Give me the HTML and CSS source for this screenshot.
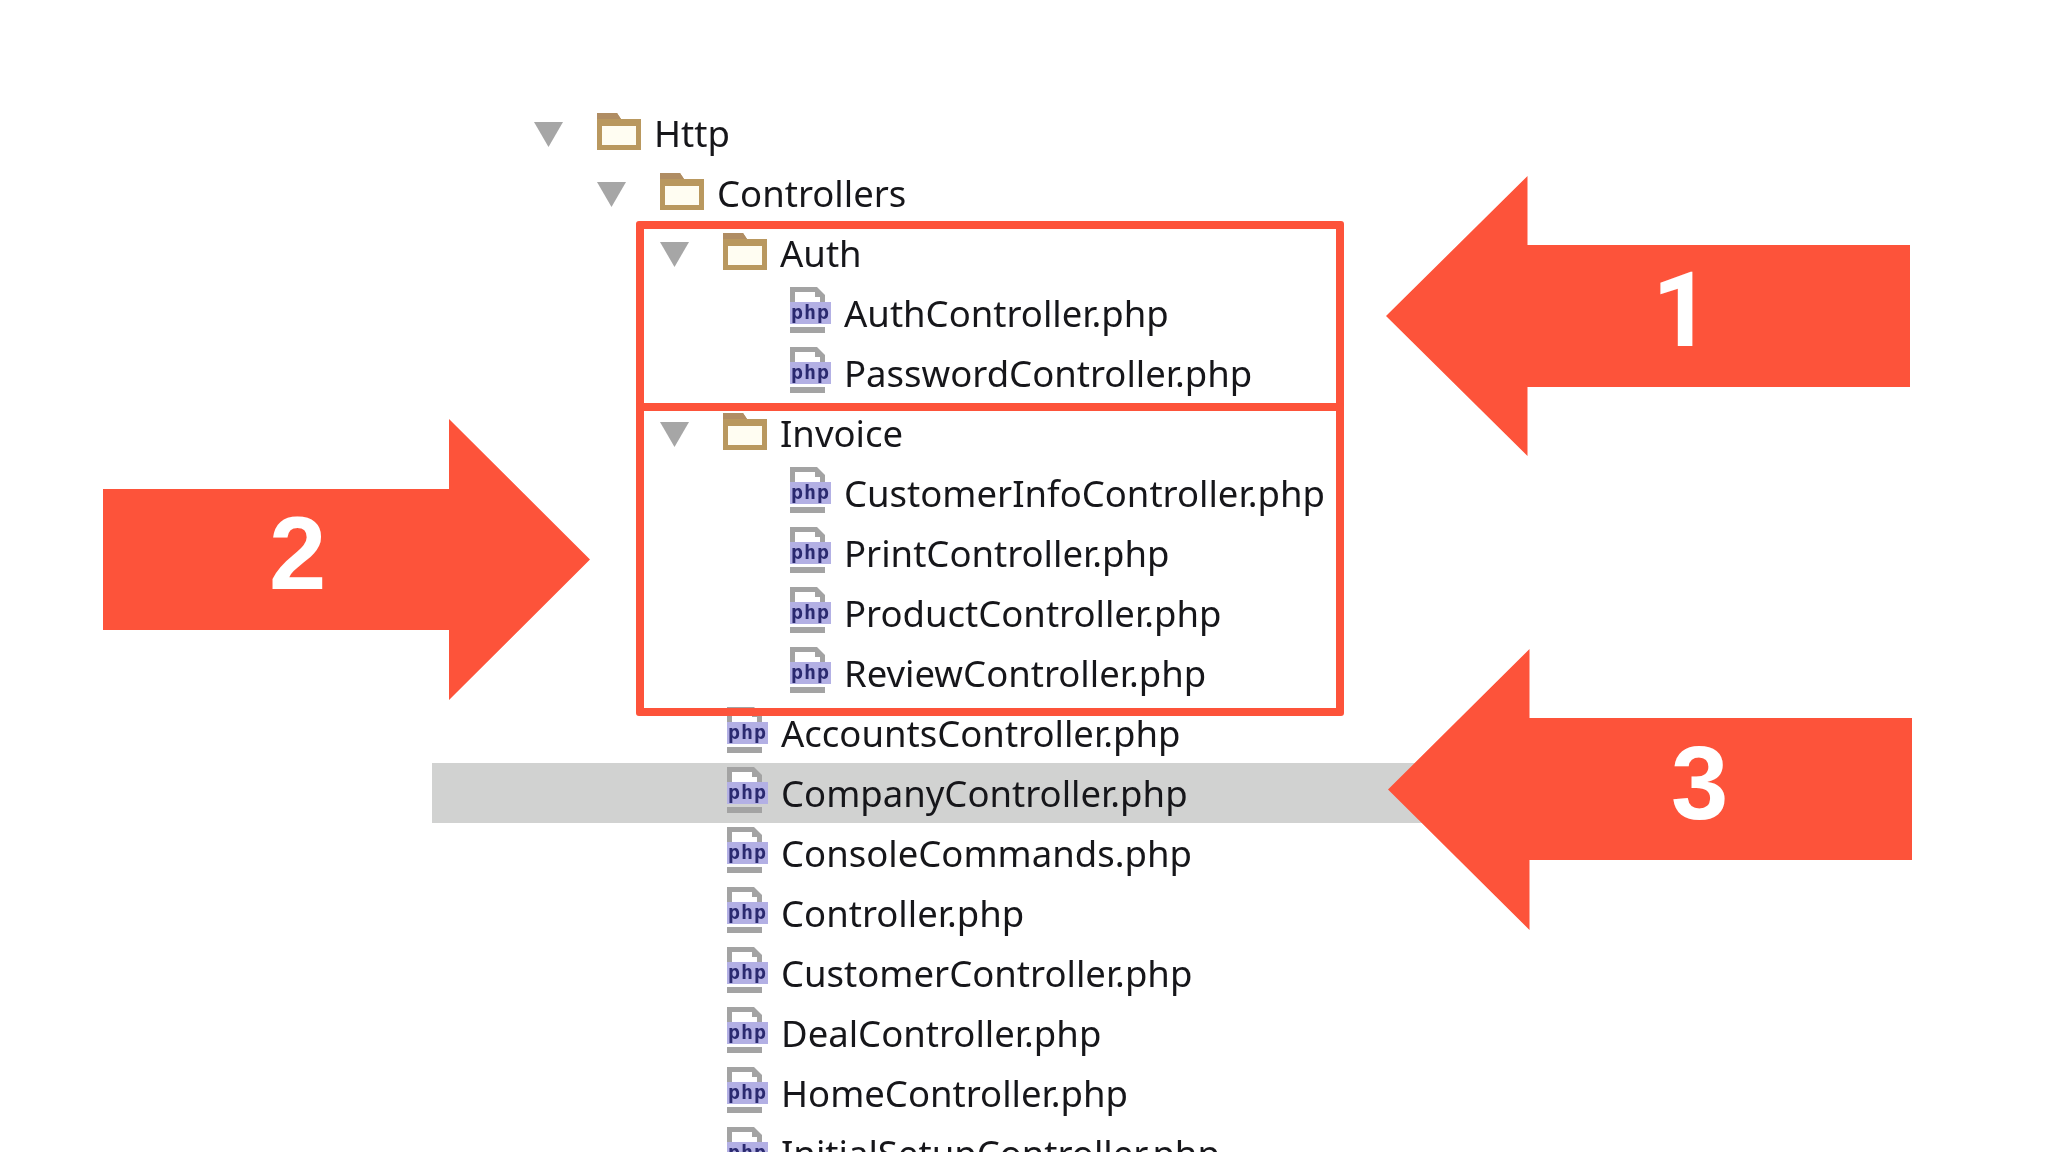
FILE: index.html
```html
<!DOCTYPE html>
<html lang="en">
<head>
    <meta charset="UTF-8">
    <meta name="viewport" content="width=device-width, initial-scale=1.0">
    <title>Controllers folder structure</title>
    <link rel="stylesheet" href="styles.css">
</head>
<body>
    <svg class="defs" width="0" height="0">
        <symbol id="folder" viewBox="0 0 44 37">
            <path d="M0 0H20L24 6H44V37H0Z" fill="#b9985f"/>
            <path d="M0 0H20L24 6H0Z" fill="#b08d63"/>
            <rect x="5" y="13" width="34" height="19" fill="#fffdf2"/>
        </symbol>
        <symbol id="page" viewBox="0 0 41 46">
            <path d="M0 0H27L35 8V15H30V10H25V5H5V15H0Z" fill="#a3a3a3"/>
            <rect x="5" y="5" width="20" height="10" fill="#fff"/>
            <rect x="25" y="10" width="5" height="5" fill="#fff"/>
            <rect x="0" y="15" width="41" height="22" fill="#b3b0e4"/>
            <rect x="0" y="40" width="35" height="6" fill="#a3a3a3"/>
        </symbol>
    </svg>

    <div class="tree">
        <div class="row d0"><span class="slot"><i class="twisty"></i></span><svg class="folder"><use href="#folder"/></svg><span>Http</span></div>
        <div class="row d1"><span class="slot"><i class="twisty"></i></span><svg class="folder"><use href="#folder"/></svg><span>Controllers</span></div>
        <div class="row d2"><span class="slot"><i class="twisty"></i></span><svg class="folder"><use href="#folder"/></svg><span>Auth</span></div>
        <div class="row d3"><span class="slot"></span><span class="file"><svg><use href="#page"/></svg><b>php</b></span><span>AuthController.php</span></div>
        <div class="row d3"><span class="slot"></span><span class="file"><svg><use href="#page"/></svg><b>php</b></span><span>PasswordController.php</span></div>
        <div class="row d2"><span class="slot"><i class="twisty"></i></span><svg class="folder"><use href="#folder"/></svg><span>Invoice</span></div>
        <div class="row d3"><span class="slot"></span><span class="file"><svg><use href="#page"/></svg><b>php</b></span><span>CustomerInfoController.php</span></div>
        <div class="row d3"><span class="slot"></span><span class="file"><svg><use href="#page"/></svg><b>php</b></span><span>PrintController.php</span></div>
        <div class="row d3"><span class="slot"></span><span class="file"><svg><use href="#page"/></svg><b>php</b></span><span>ProductController.php</span></div>
        <div class="row d3"><span class="slot"></span><span class="file"><svg><use href="#page"/></svg><b>php</b></span><span>ReviewController.php</span></div>
        <div class="row d2"><span class="slot"></span><span class="file"><svg><use href="#page"/></svg><b>php</b></span><span>AccountsController.php</span></div>
        <div class="row d2 selected"><span class="slot"></span><span class="file"><svg><use href="#page"/></svg><b>php</b></span><span>CompanyController.php</span></div>
        <div class="row d2"><span class="slot"></span><span class="file"><svg><use href="#page"/></svg><b>php</b></span><span>ConsoleCommands.php</span></div>
        <div class="row d2"><span class="slot"></span><span class="file"><svg><use href="#page"/></svg><b>php</b></span><span>Controller.php</span></div>
        <div class="row d2"><span class="slot"></span><span class="file"><svg><use href="#page"/></svg><b>php</b></span><span>CustomerController.php</span></div>
        <div class="row d2"><span class="slot"></span><span class="file"><svg><use href="#page"/></svg><b>php</b></span><span>DealController.php</span></div>
        <div class="row d2"><span class="slot"></span><span class="file"><svg><use href="#page"/></svg><b>php</b></span><span>HomeController.php</span></div>
        <div class="row d2"><span class="slot"></span><span class="file"><svg><use href="#page"/></svg><b>php</b></span><span>InitialSetupController.php</span></div>
    </div>

    <!-- annotations on top of the tree -->
    <div class="box box-auth"></div>
    <div class="box box-invoice"></div>
    <div class="arrow arrow-left arrow-1"><span>1</span></div>
    <div class="arrow arrow-right arrow-2"><span>2</span></div>
    <div class="arrow arrow-left arrow-3"><span>3</span></div>
</body>
</html>
```

FILE: styles.css
```css
html, body {
    height: 100%;
}
body {
    margin: 0;
    overflow: hidden;
    background-color: #fff;
    font-family: "Noto Sans", sans-serif;
    color: #16161a;
}
.defs {
    position: absolute;
}

/* tree */
.tree {
    width: 1070px;
    margin-left: 432px;
    padding-top: 103px;
    filter: blur(0.6px);
}
.row {
    display: flex;
    align-items: center;
    height: 60px;
    font-size: 36.5px;
    white-space: nowrap;
}
.d0 { padding-left: 102px; }
.d1 { padding-left: 165px; }
.d2 { padding-left: 228px; }
.d3 { padding-left: 291px; }
.selected {
    background-color: #d1d2d1;
}
.slot {
    flex: none;
    width: 63px;
    display: flex;
}
.twisty {
    width: 29px;
    height: 25px;
    margin-top: 3px;
    background-color: #a6a6a6;
    clip-path: polygon(0 0, 100% 0, 50% 100%);
}
.folder {
    flex: none;
    width: 44px;
    height: 37px;
    margin-right: 13px;
    margin-bottom: 3px;
}
.file {
    flex: none;
    position: relative;
    width: 41px;
    height: 46px;
    margin-left: 4px;
    margin-right: 13px;
    margin-bottom: 6px;
}
.file svg {
    display: block;
    width: 41px;
    height: 46px;
}
.file b {
    position: absolute;
    left: 1px;
    top: 12px;
    font-family: "DejaVu Sans Mono", monospace;
    font-size: 20px;
    line-height: 26px;
    letter-spacing: 1px;
    color: #2b2a70;
}

/* red boxes */
.box {
    position: absolute;
    left: 636px;
    width: 708px;
    box-sizing: border-box;
    border: 8px solid #fd533a;
    border-radius: 3px;
}
.box-auth {
    top: 221px;
    height: 190px;
}
.box-invoice {
    top: 403px;
    height: 313px;
}

/* arrows */
.arrow {
    position: absolute;
    box-sizing: border-box;
    display: flex;
    align-items: center;
    background-color: #fd533a;
    font-family: "Liberation Sans", Arial, sans-serif;
    font-weight: bold;
    font-size: 103px;
    line-height: 1;
    color: #fff;
}
.arrow span {
    margin-bottom: 12px;
}
.arrow-left {
    clip-path: polygon(0 50%, 141.5px 0, 141.5px 69px, 100% 69px, 100% 211px, 141.5px 211px, 141.5px 100%);
}
.arrow-1 {
    left: 1386px;
    top: 176px;
    width: 524px;
    height: 280px;
    padding-left: 266px;
    font-family: Roboto, "Liberation Sans", sans-serif;
}
.arrow-2 {
    left: 103px;
    top: 419px;
    width: 487px;
    height: 281px;
    padding-left: 166px;
    clip-path: polygon(0 70px, 346px 70px, 346px 0, 100% 50%, 346px 100%, 346px 211px, 0 211px);
}
.arrow-3 {
    left: 1388px;
    top: 649px;
    width: 524px;
    height: 281px;
    padding-left: 283px;
}
```
